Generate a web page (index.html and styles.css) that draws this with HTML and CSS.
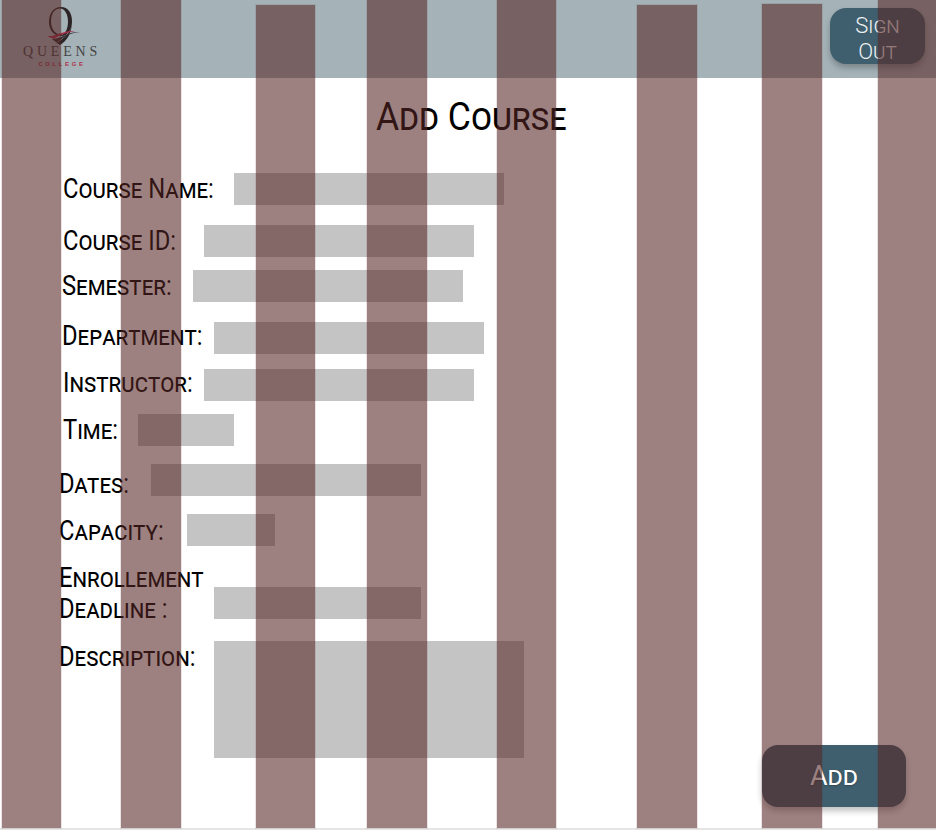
FILE: index.html
```html
<!DOCTYPE html>
<html lang="en">
<head>
  <meta charset="UTF-8" />
  <title>Add Course</title>
  <link rel="stylesheet" href="styles.css">
</head>
<body>
  <header class="topbar">
    <div class="logo">
      <svg class="logo-mark" width="44" height="40" viewBox="0 0 44 40">
        <g transform="translate(4 0)">
          <path fill-rule="evenodd" d="M17 2C9 2 5 9 5 17c0 8 5 14 12 14 8 0 11-8 11-15C28 8 24 2 17 2zM16 3.5c5 0 8 6 8 13 0 6-2 13-7 13-6 0-10-6-10-13C7 9 10 3.5 16 3.5z" fill="#2c2426"/>
          <path d="M28 16c0 6-2 11-6 15l-9 7 3 2c7-4 12-12 12-24z" fill="#2c2426"/>
        </g>
        <path d="M12 34c9 0 17-8 28-7-10 1-17 5-23 11z" fill="#3a3234"/>
        <path d="M7 31c9 1 15-6 28-5-9 2-15 4-21 8z" fill="#a8324a"/>
      </svg>
      <span class="logo-name">QUEENS</span>
      <span class="logo-sub">COLLEGE</span>
    </div>
    <button class="btn btn-signout">Sign Out</button>
  </header>

  <main class="page">
    <h1 class="title">Add Course</h1>
    <form class="course-form">
      <div class="row row-name"><label>Course Name:</label><input type="text" class="field w270"></div>
      <div class="row row-id"><label>Course ID:</label><input type="text" class="field w270"></div>
      <div class="row row-sem"><label>Semester:</label><input type="text" class="field w270"></div>
      <div class="row row-dept"><label>Department:</label><input type="text" class="field w270"></div>
      <div class="row row-inst"><label>Instructor:</label><input type="text" class="field w270"></div>
      <div class="row row-time"><label>Time:</label><input type="text" class="field w96"></div>
      <div class="row row-dates"><label>Dates:</label><input type="text" class="field w270"></div>
      <div class="row row-cap"><label>Capacity:</label><input type="text" class="field w88"></div>
      <div class="row row-enroll"><label>Enrollement<br>Deadline :</label><input type="text" class="field w207"></div>
      <div class="row row-desc"><label>Description:</label><textarea class="field area"></textarea></div>
    </form>
    <div class="actions"><button class="btn btn-add">Add</button></div>
  </main>

  <div class="stripes">
    <span class="stripe s1"></span>
    <span class="stripe s2"></span>
    <span class="stripe s3"></span>
    <span class="stripe s4"></span>
    <span class="stripe s5"></span>
    <span class="stripe s6"></span>
    <span class="stripe s7"></span>
    <span class="stripe s8"></span>
  </div>
</body>
</html>
```

FILE: styles.css
```css
* {
  margin: 0;
  padding: 0;
  box-sizing: border-box;
}

html, body {
  height: 100%;
  overflow: hidden;
}

body {
  font-family: 'Roboto', sans-serif;
  background: #e5e5e5;
  color: #000;
  position: relative;
}

.topbar {
  height: 78px;
  background: #a5b3b9;
  display: flex;
  justify-content: space-between;
  align-items: flex-start;
  padding: 8px 11px 0 23px;
}

.logo {
  width: 78px;
  display: flex;
  flex-direction: column;
  align-items: center;
  font-family: 'Liberation Serif', serif;
  margin-top: -3px;
}

.logo-mark {
  display: block;
}

.logo-name {
  font-size: 14px;
  letter-spacing: 3.8px;
  color: #444;
  line-height: 13px;
}

.logo-sub {
  font-family: 'Liberation Sans', sans-serif;
  font-size: 6px;
  font-weight: bold;
  letter-spacing: 2.6px;
  margin-top: 2px;
  color: #b03048;
  line-height: 8px;
}

.btn {
  border: none;
  color: #eef1f2;
  background: #3f5f6e;
  font-family: 'Roboto', sans-serif;
  font-weight: 300;
  font-variant: small-caps;
  box-shadow: 0 4px 6px rgba(0, 0, 0, 0.25);
}

.btn-signout {
  width: 95px;
  height: 56px;
  border-radius: 16px;
  font-size: 22px;
  line-height: 26px;
  padding: 5px 20px 0;
}

.page {
  position: relative;
  height: 750px;
  background: #fff;
}

.title {
  font-size: 39px;
  font-weight: 400;
  font-variant: small-caps;
  text-align: center;
  transform: scaleX(0.91);
  line-height: 44px;
  padding: 17px 0 0 7px;
  height: 61px;
  white-space: nowrap;
}

.course-form {
  padding-left: 60px;
}

.row {
  display: flex;
  align-items: center;
}

.row label {
  font-size: 27px;
  font-variant: small-caps;
  line-height: 31px;
  white-space: nowrap;
  transform: translateY(var(--nudge, 0)) scaleX(0.88);
  transform-origin: left center;
}

.field {
  display: block;
  border: none;
  background: #c4c4c4;
  height: 32px;
  resize: none;
  flex-shrink: 0;
}

.w270 { width: 270px; }
.w96 { width: 96px; }
.w88 { width: 88px; }
.w207 { width: 207px; }

.area {
  width: 310px;
  height: 117px;
}

.row-name { margin: 34px 0 0 3px; }
.row-name label { width: 171px; }
.row-id { margin: 20px 0 0 3px; }
.row-id label { width: 141px; }
.row-sem { margin: 13px 0 0 2px; }
.row-sem label { width: 131px; }
.row-dept { margin: 20px 0 0 2px; }
.row-dept label { width: 152px; --nudge: -2px; }
.row-inst { margin: 15px 0 0 3px; }
.row-inst label { width: 141px; --nudge: -2px; }
.row-time { margin: 13px 0 0 3px; }
.row-time label { width: 75px; }
.row-dates { margin: 18px 0 0 -1px; }
.row-dates label { width: 92px; --nudge: 4px; }
.row-cap { margin: 18px 0 0 -1px; }
.row-cap label { width: 128px; --nudge: 1px; }
.row-enroll { margin: 20px 0 0 -1px; }
.row-enroll label { width: 155px; --nudge: -3px; }
.row-enroll .field { margin-top: 12px; }
.row-desc { margin: 13px 0 0 -1px; align-items: flex-start; }
.row-desc label { width: 155px; --nudge: 1px; }

.actions {
  position: absolute;
  right: 30px;
  top: 667px;
}

.btn-add {
  width: 144px;
  height: 62px;
  border-radius: 16px;
  font-size: 27px;
  font-weight: 400;
  color: #fff;
  text-shadow: 0 1px 2px rgba(0, 0, 0, 0.25);
}

.stripes {
  position: absolute;
  inset: 0 0 2px 0;
  pointer-events: none;
}

.stripe {
  position: absolute;
  top: 0;
  bottom: 0;
  background: rgba(86, 38, 36, 0.58);
  box-shadow: 0 0 0 1px rgba(86, 38, 36, 0.12);
}

.s1 { left: 2px; width: 59px; }
.s2 { left: 121px; width: 60px; }
.s3 { left: 256px; width: 59px; top: 5px; }
.s4 { left: 367px; width: 60px; }
.s5 { left: 497px; width: 59px; }
.s6 { left: 637px; width: 60px; top: 5px; }
.s7 { left: 762px; width: 60px; top: 4px; }
.s8 { left: 878px; width: 58px; }
```
